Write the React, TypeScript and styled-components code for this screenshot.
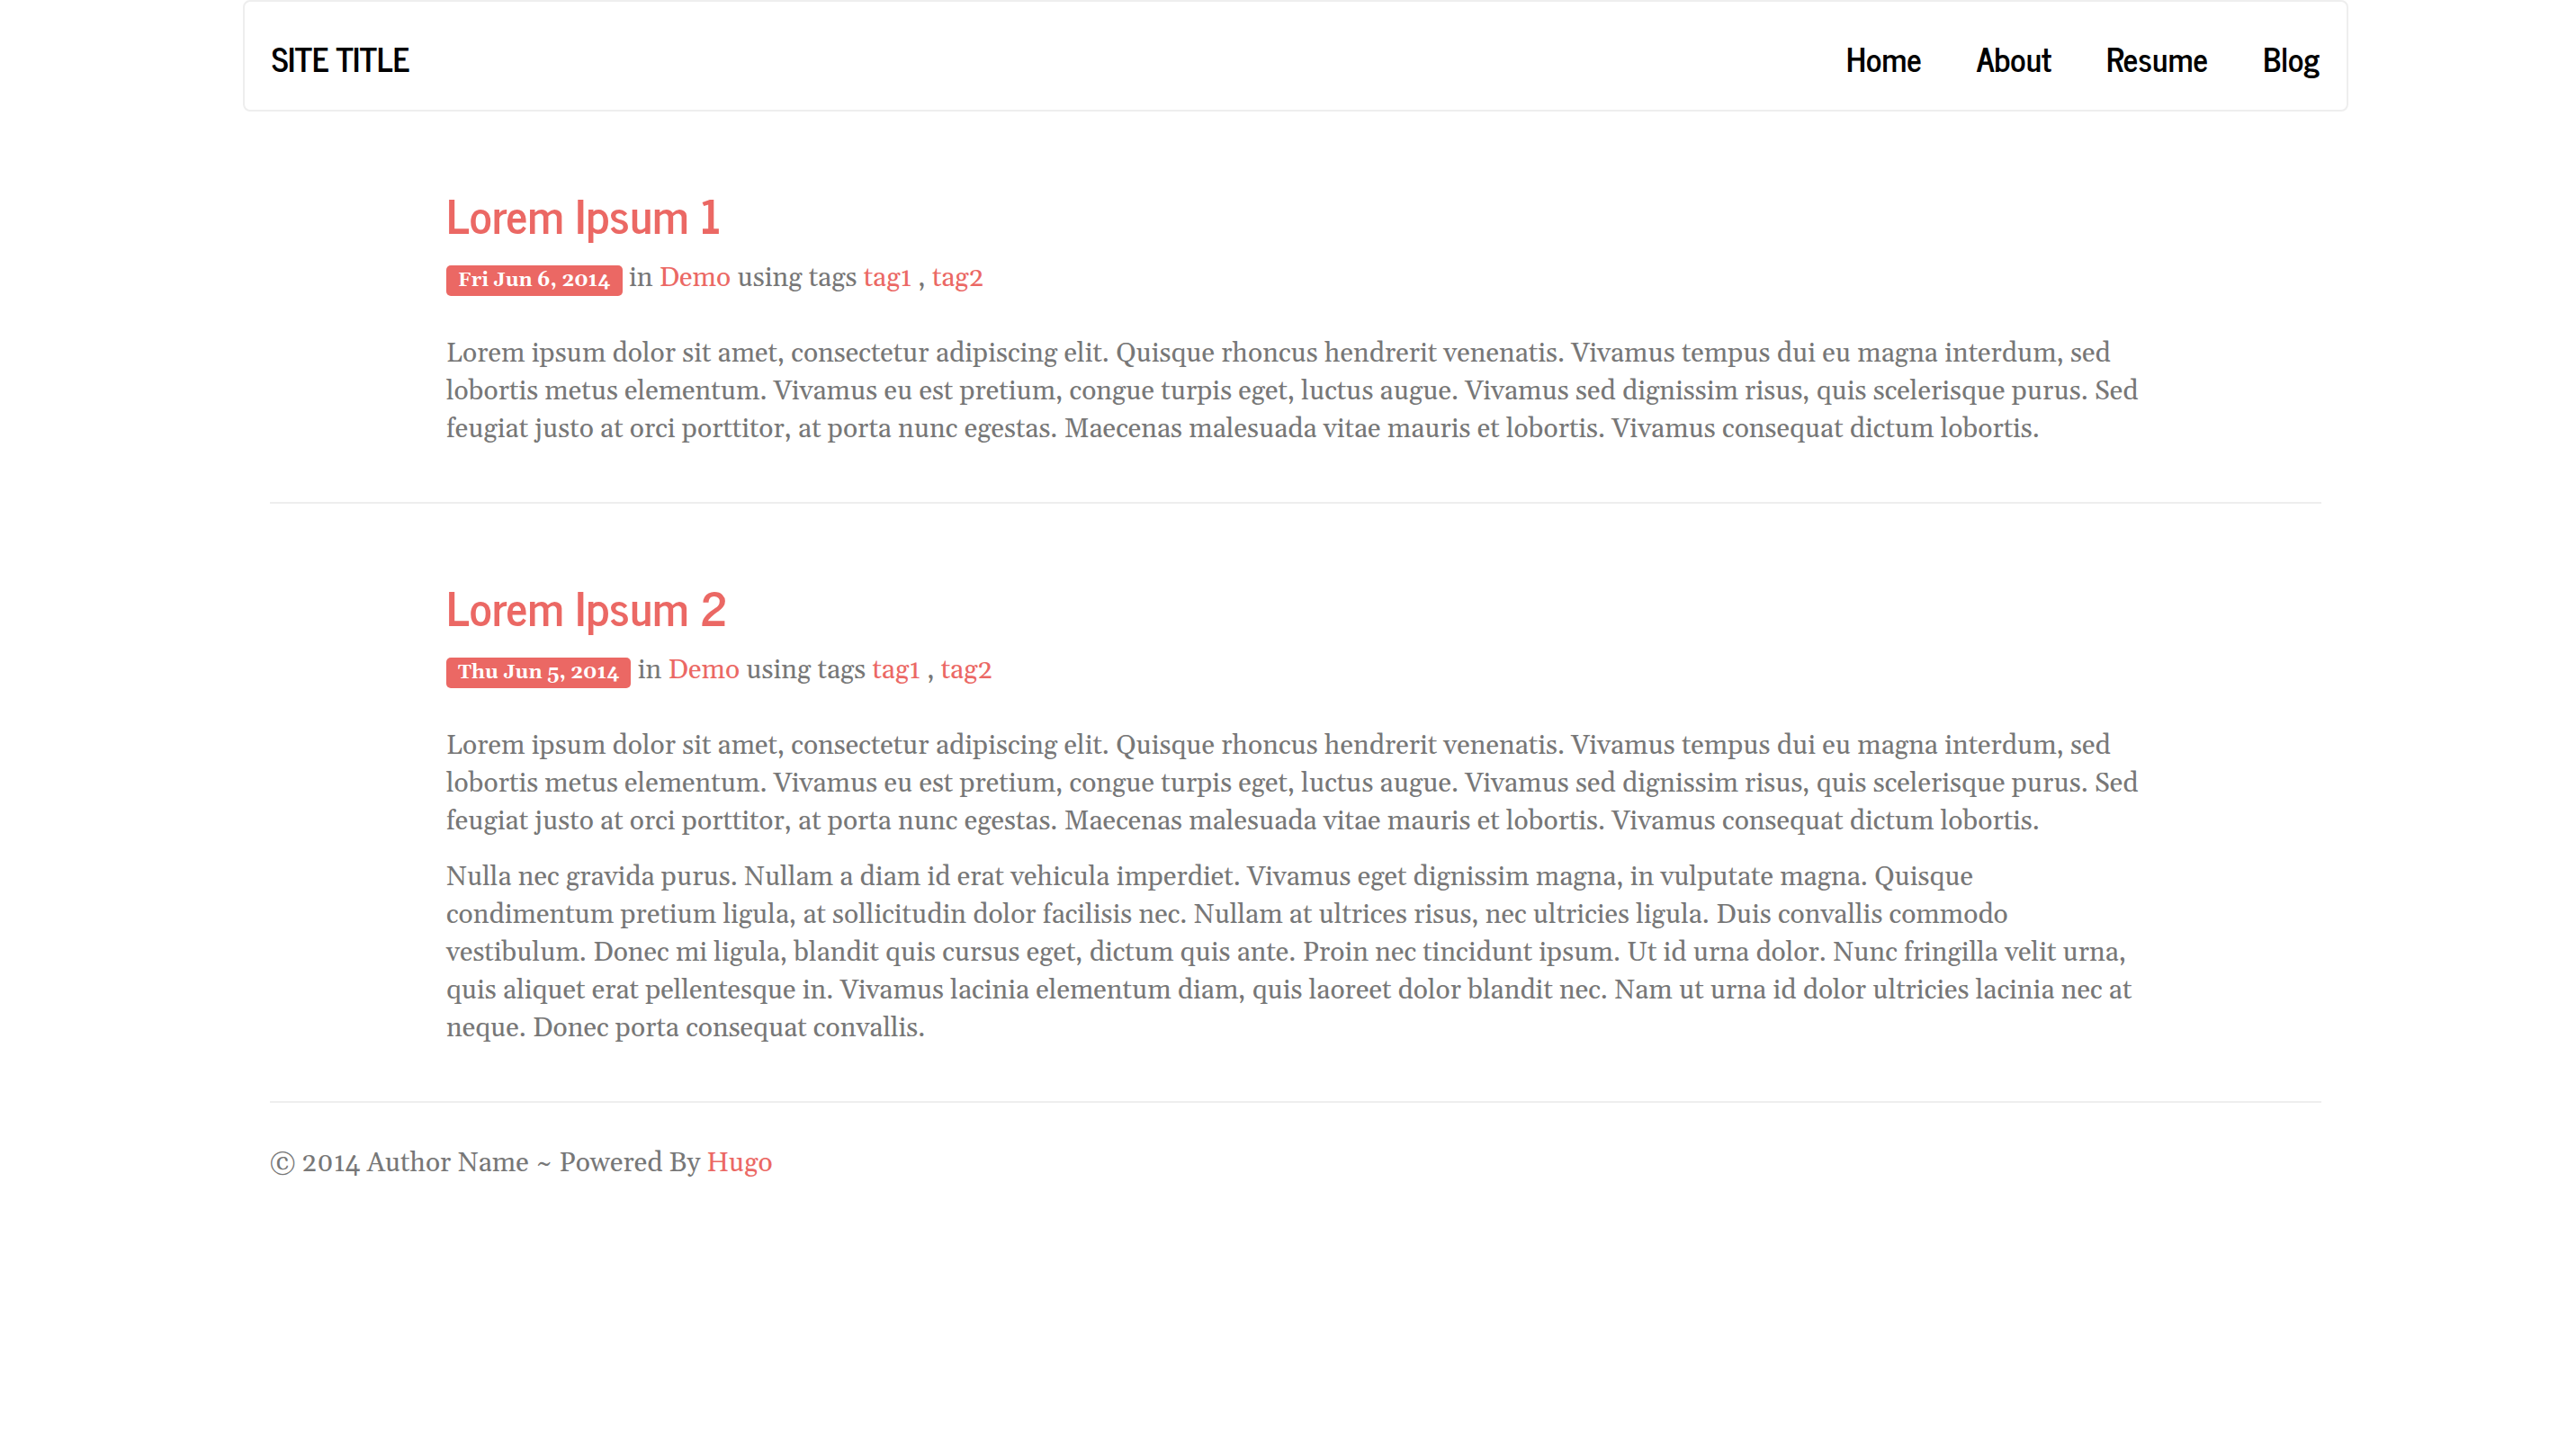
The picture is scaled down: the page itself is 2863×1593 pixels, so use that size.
import React from "react";
import styled, { createGlobalStyle } from "styled-components";

const accent = "#eb6864";
const border = "#eeeeee";
const bodyFont = `Georgia, Gelasio, "Liberation Serif", serif`;
const headingFont = `"News Cycle", "Roboto Condensed", "Liberation Sans", sans-serif`;

const GlobalStyle = createGlobalStyle`
  *, *::before, *::after {
    box-sizing: border-box;
  }

  body {
    margin: 0;
    background: #ffffff;
    color: #777777;
    font-family: ${bodyFont};
    font-size: 30px;
    line-height: 42px;
    font-variant-numeric: oldstyle-nums;
  }
`;

const Page = styled.div`
  padding-left: 17px;
`;

const Container = styled.div`
  max-width: 2340px;
  margin: 0 auto;
`;

const Navbar = styled.header`
  display: flex;
  align-items: center;
  justify-content: space-between;
  padding: 35px 30px 29px;
  border: 2px solid ${border};
  border-radius: 8px;
  font-family: ${headingFont};
  font-size: 36px;
  font-weight: 700;
  line-height: 56px;
`;

const NavLink = styled.a`
  color: #000000;
  text-decoration: none;
`;

const NavLinks = styled.nav`
  display: flex;
  gap: 61px;
`;

const Content = styled.main`
  padding: 0 30px;
`;

const Post = styled.article`
  padding: 85px 196px 60px;
  border-bottom: 2px solid ${border};
`;

const PostTitle = styled.h1`
  margin: 0 0 21px;
  font-family: ${headingFont};
  font-size: 52px;
  font-weight: 700;
  line-height: 58px;
`;

const Link = styled.a`
  color: ${accent};
  text-decoration: none;
`;

const Meta = styled.div`
  margin-bottom: 42px;
`;

const DateLabel = styled.time`
  display: inline-block;
  padding: 6px 13px;
  border-radius: 5px;
  background: ${accent};
  color: #ffffff;
  font-size: 22px;
  font-weight: 700;
  line-height: 22px;
`;

const Paragraph = styled.p`
  margin: 0 0 20px;

  &:last-child {
    margin-bottom: 0;
  }
`;

const Footer = styled.footer`
  padding: 46px 30px;
`;

const lorem =
  "Lorem ipsum dolor sit amet, consectetur adipiscing elit. Quisque rhoncus hendrerit venenatis. Vivamus tempus dui eu magna interdum, sed lobortis metus elementum. Vivamus eu est pretium, congue turpis eget, luctus augue. Vivamus sed dignissim risus, quis scelerisque purus. Sed feugiat justo at orci porttitor, at porta nunc egestas. Maecenas malesuada vitae mauris et lobortis. Vivamus consequat dictum lobortis.";

const nulla =
  "Nulla nec gravida purus. Nullam a diam id erat vehicula imperdiet. Vivamus eget dignissim magna, in vulputate magna. Quisque condimentum pretium ligula, at sollicitudin dolor facilisis nec. Nullam at ultrices risus, nec ultricies ligula. Duis convallis commodo vestibulum. Donec mi ligula, blandit quis cursus eget, dictum quis ante. Proin nec tincidunt ipsum. Ut id urna dolor. Nunc fringilla velit urna, quis aliquet erat pellentesque in. Vivamus lacinia elementum diam, quis laoreet dolor blandit nec. Nam ut urna id dolor ultricies lacinia nec at neque. Donec porta consequat convallis.";

const navItems = ["Home", "About", "Resume", "Blog"];

const posts = [
  {
    title: "Lorem Ipsum 1",
    date: "Fri Jun 6, 2014",
    iso: "2014-06-06",
    paragraphs: [lorem],
  },
  {
    title: "Lorem Ipsum 2",
    date: "Thu Jun 5, 2014",
    iso: "2014-06-05",
    paragraphs: [lorem, nulla],
  },
];

export default function App() {
  return (
    <Page>
      <GlobalStyle />
      <Container>
        <Navbar>
          <NavLink href="#">SITE TITLE</NavLink>
          <NavLinks>
            {navItems.map((item) => (
              <NavLink key={item} href="#">
                {item}
              </NavLink>
            ))}
          </NavLinks>
        </Navbar>
        <Content>
          {posts.map((post) => (
            <Post key={post.title}>
              <PostTitle>
                <Link href="#">{post.title}</Link>
              </PostTitle>
              <Meta>
                <DateLabel dateTime={post.iso}>{post.date}</DateLabel> in{" "}
                <Link href="#">Demo</Link> using tags <Link href="#">tag1</Link>{" "}
                , <Link href="#">tag2</Link>
              </Meta>
              {post.paragraphs.map((text) => (
                <Paragraph key={text}>{text}</Paragraph>
              ))}
            </Post>
          ))}
        </Content>
        <Footer>
          © 2014 Author Name ~ Powered By <Link href="#">Hugo</Link>
        </Footer>
      </Container>
    </Page>
  );
}
